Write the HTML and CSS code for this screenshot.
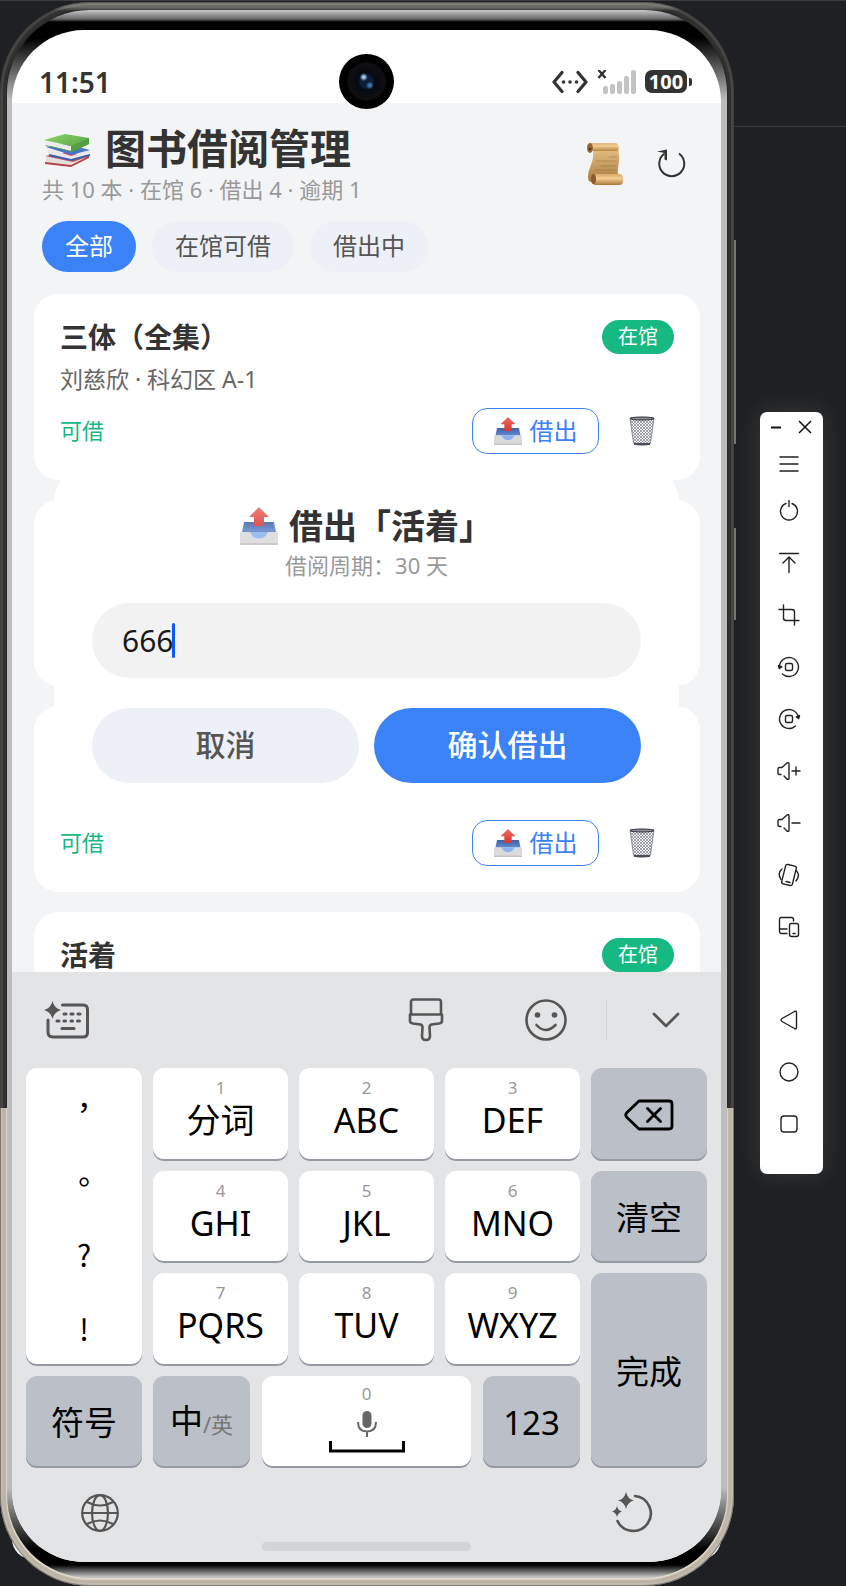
FILE: index.html
```html
<!DOCTYPE html>
<html lang="zh-CN">
<head>
<meta charset="utf-8">
<meta name="viewport" content="width=device-width, initial-scale=1">
<title>图书借阅管理</title>
<link rel="stylesheet" href="styles.css">
</head>
<body>
<svg class="defs" aria-hidden="true">
  <defs>
    <linearGradient id="g-green" x1="0" y1="0" x2="1" y2="1"><stop offset="0" stop-color="#8fd46a"/><stop offset="1" stop-color="#4c9e3c"/></linearGradient>
    <linearGradient id="g-paper" x1="0" y1="0" x2="0" y2="1"><stop offset="0" stop-color="#ecc98a"/><stop offset="1" stop-color="#a87b3e"/></linearGradient>
    <linearGradient id="g-roll" x1="0" y1="0" x2="0" y2="1"><stop offset="0" stop-color="#d9a866"/><stop offset=".4" stop-color="#f3cd94"/><stop offset="1" stop-color="#ab7638"/></linearGradient>
    <linearGradient id="g-red" x1="0" y1="0" x2="0" y2="1"><stop offset="0" stop-color="#ef6a62"/><stop offset="1" stop-color="#d8352f"/></linearGradient>
    <linearGradient id="g-tray" x1="0" y1="0" x2="0" y2="1"><stop offset="0" stop-color="#3c5ea6"/><stop offset="1" stop-color="#5f86cc"/></linearGradient>
    <pattern id="mesh" width="3" height="3" patternUnits="userSpaceOnUse"><path d="M0 0l3 3M3 0L0 3" stroke="#6b6d78" stroke-width=".6"/></pattern>
  </defs>
  <symbol id="outbox" viewBox="0 0 38 38">
    <path d="M4 15h30l2 10H2z" fill="#5b7ec0"/>
    <path d="M5 15h28l1.500 9H3.500z" fill="url(#g-tray)"/>
    <path d="M0 25h10c2 5 5 6.500 9 6.500s7-1.500 9-6.500h10v13H0z" fill="#dadada"/>
    <path d="M10 25h18c-2 5-5 6.500-9 6.500S12 30 10 25z" fill="#8db3ea"/>
    <path d="M0 36h38v2H0z" fill="#c4c4c4"/>
    <path d="M19 0l10 10h-5v9H14v-9H9z" fill="url(#g-red)"/>
  </symbol>
  <symbol id="trash" viewBox="0 0 26 30">
    <path d="M1 2l3.500 25c0 3 17 3 17 0L25 2z" fill="#f1f2f4"/>
    <path d="M1 2l3.500 25c0 3 17 3 17 0L25 2z" fill="url(#mesh)" stroke="#777984" stroke-width=".8"/>
    <path d="M5 28h16" stroke="#4b4d58" stroke-width="2"/>
    <ellipse cx="13" cy="2.500" rx="12" ry="1.500" fill="#8a8c96" stroke="#2e3039" stroke-width="1"/>
  </symbol>
</svg>

<main class="phone">
  <div class="frame"><div class="rim"><div class="screen">

    <header class="status">
      <time class="clock">11:51</time>
      <span class="camera" aria-hidden="true"></span>
      <div class="status-icons">
        <svg width="36" height="24" viewBox="0 0 36 24" fill="none" stroke="#333" stroke-width="3.200" stroke-linecap="round" stroke-linejoin="round"><path d="M10 2.500L2 12l8 9.500M26 2.500L34 12l-8 9.500"/><g fill="#333" stroke="none"><circle cx="11.500" cy="12" r="1.800"/><circle cx="18" cy="12" r="1.800"/><circle cx="24.500" cy="12" r="1.800"/></g></svg>
        <svg class="signal" width="39" height="24" viewBox="0 0 39 24"><path d="M1.500 0l7 8M8.500 0l-7 8" stroke="#333" stroke-width="2.400"/><g fill="#c3c3c3"><rect x="6" y="16" width="5" height="8" rx="2"/><rect x="13" y="14" width="5" height="10" rx="2"/><rect x="20" y="11" width="5" height="13" rx="2"/><rect x="27" y="6" width="5" height="18" rx="2"/><rect x="34" y="0" width="5" height="24" rx="2"/></g></svg>
        <span class="battery">100</span>
      </div>
    </header>

    <section class="app">
      <div class="head">
        <div class="head-text">
          <h1>
            <svg width="48" height="34" viewBox="0 0 48 34"><path d="M3 24l20-3 22 3-17 9L3 31z" fill="#e2dfdc"/><path d="M2 23l23-4 22 4-17 6z" fill="#c9505a"/><path d="M2 29l26 3 18-9v2L28 34 2 31z" fill="#b5444d"/><path d="M4 15l24 8 19-6v4l-19 6-22-6z" fill="#e8e8ea"/><path d="M3 14l21-3 23 6-19 5z" fill="#4a74c9"/><path d="M6 21l22 5 19-5v2l-19 5-22-5z" fill="#3a5fb0"/><path d="M2 8l26 5v5L3 12z" fill="#ecece8"/><path d="M1 7l21-6 24 4v6l-17 8-1-6z" fill="url(#g-green)"/><path d="M28 13l18-8v6l-17 8z" fill="#4f9a3d" opacity=".7"/><path d="M2 12l26 6 1 1-26-6z" fill="#4f9a3d"/></svg>
            <span>图书借阅管理</span>
          </h1>
          <p class="summary">共 10 本 · 在馆 6 · 借出 4 · 逾期 1</p>
        </div>
        <div class="head-actions">
          <button class="icon-btn" aria-label="记录"><svg width="36" height="42" viewBox="0 0 36 42"><path d="M7 1h23c3 2 1 7 2 11 1 7-2 12-1 21H8c0 6-7 9-7 1 0-9 6-14 5-24z" fill="url(#g-paper)"/><path d="M12 5h17M22 14h8M9 18h21M14 23h15M8 27h20" stroke="#9c7137" stroke-width="1" opacity=".5"/><rect x="5" y="31" width="31" height="11" rx="4" fill="url(#g-roll)"/><ellipse cx="6.500" cy="36" rx="2.500" ry="5" fill="#8b5c29"/><path d="M3 0h26c3 1 3 6 1 8H6z" fill="url(#g-roll)" opacity=".8"/><ellipse cx="3" cy="5" rx="3" ry="5" fill="#96662f"/><circle cx="3" cy="6" r="1.300" fill="#4d3011"/></svg></button>
          <button class="icon-btn" aria-label="刷新"><svg width="30" height="30" viewBox="0 0 30 30"><path d="M22 4.500a12.500 12.500 0 1 1-14.500 0" fill="none" stroke="#333" stroke-width="2"/><path d="M0 2.500L10 .5v11l-2.500-1V4z" fill="#333"/></svg></button>
        </div>
      </div>

      <nav class="chips">
        <button class="chip chip-on">全部</button>
        <button class="chip">在馆可借</button>
        <button class="chip">借出中</button>
      </nav>

      <div class="books">
        <article class="card">
          <div class="row"><h2>三体（全集）</h2><span class="badge">在馆</span></div>
          <p class="meta">刘慈欣 · 科幻区 A-1</p>
          <div class="row foot"><span class="avail">可借</span><button class="lend"><svg width="28" height="28"><use href="#outbox"/></svg><span>借出</span></button><button class="del" aria-label="删除"><svg width="26" height="30"><use href="#trash"/></svg></button></div>
        </article>
        <article class="card"></article>
        <article class="card">
          <div class="row foot"><span class="avail">可借</span><button class="lend"><svg width="28" height="28"><use href="#outbox"/></svg><span>借出</span></button><button class="del" aria-label="删除"><svg width="26" height="30"><use href="#trash"/></svg></button></div>
        </article>
        <article class="card">
          <div class="row"><h2>活着</h2><span class="badge">在馆</span></div>
        </article>

        <form class="dialog" role="dialog" aria-labelledby="dlg-title">
          <h2 id="dlg-title"><svg width="38" height="38"><use href="#outbox"/></svg><span>借出「活着」</span></h2>
          <p><label for="borrower">借阅周期：30 天</label></p>
          <div class="field"><input id="borrower" type="text" value="666"><span class="caret" aria-hidden="true"></span></div>
          <div class="actions"><button type="button" class="pill">取消</button><button type="button" class="pill pill-main">确认借出</button></div>
        </form>
      </div>
    </section>

    <section class="keyboard" aria-label="键盘">
      <div class="tools">
        <button class="tool" aria-label="智能输入"><svg width="46" height="38" viewBox="0 0 46 38" fill="none" stroke="#555" stroke-width="3" stroke-linecap="round"><path d="M18.500 4H39q4.500 0 4.500 4.500v23q0 4.500-4.500 4.500H9q-5 0-5-5V19"/><path d="M20 13h2M27 13h2M34 13h2M13 20h2M20 20h1.500M27 20h1.500M33.500 20h2M18 27.500h12"/><path d="M8.500 0Q10 7 17 9 10 11 8.500 18 7 11 0 9 7 7 8.500 0z" fill="#555" stroke="none"/></svg></button>
        <span class="fill"></span>
        <button class="tool" aria-label="皮肤"><svg width="36" height="44" viewBox="0 0 36 44" fill="none" stroke="#555" stroke-width="2.600" stroke-linejoin="round"><path d="M3 16V4q0-2.500 2.500-2.500h25Q33 1.500 33 4v12M2 16.500h32v6.500q0 2-3 2.500l-7.500 1q-2 .5-2 3L22 38q0 4-4 4t-4-4l.5-8.500q0-2.500-2-3l-7.500-1Q2 25 2 23z"/></svg></button>
        <button class="tool" aria-label="表情"><svg width="42" height="42" viewBox="0 0 42 42" fill="none" stroke="#555" stroke-width="2.600" stroke-linecap="round"><circle cx="21" cy="21" r="19.500"/><path d="M11.500 26q9 10 19 0"/><g fill="#555" stroke="none"><circle cx="12.500" cy="16" r="2.800"/><circle cx="29.500" cy="16" r="2.800"/></g></svg></button>
        <span class="sep"></span>
        <button class="tool" aria-label="收起"><svg width="28" height="16" viewBox="0 0 28 16" fill="none" stroke="#555" stroke-width="2.800" stroke-linecap="round" stroke-linejoin="round"><path d="M2 2l12 12L26 2"/></svg></button>
      </div>

      <div class="keys">
        <div class="col">
          <div class="key punct"><button>，</button><button>。</button><button>?</button><button>!</button></div>
          <button class="key key-fn">符号</button>
        </div>
        <div class="col">
          <div class="line"><button class="key"><small>1</small>分词</button><button class="key"><small>2</small>ABC</button><button class="key"><small>3</small>DEF</button></div>
          <div class="line"><button class="key"><small>4</small>GHI</button><button class="key"><small>5</small>JKL</button><button class="key"><small>6</small>MNO</button></div>
          <div class="line"><button class="key"><small>7</small>PQRS</button><button class="key"><small>8</small>TUV</button><button class="key"><small>9</small>WXYZ</button></div>
          <div class="line line-space">
            <button class="key key-fn"><span>中<span class="alt">/英</span></span></button>
            <button class="key key-space"><small>0</small><svg width="76" height="42" viewBox="0 0 76 42" fill="none"><rect x="33.500" y="0" width="9" height="17" rx="4.500" fill="#666"/><path d="M29 11q0 9.500 9 9.500t9-9.500M38 20.500V26" stroke="#666" stroke-width="2"/><path d="M1.500 30v10h73V30" stroke="#000" stroke-width="3"/></svg></button>
            <button class="key key-fn">123</button>
          </div>
        </div>
        <div class="col">
          <button class="key key-fn" aria-label="退格"><svg width="50" height="32" viewBox="0 0 50 32" fill="none" stroke="#000" stroke-width="2.800" stroke-linejoin="round" stroke-linecap="round"><path d="M15 2h30q3 0 3 3v22q0 3-3 3H15L3 18.500q-2.500-2.500 0-5zM23.500 9.500l13 13M36.500 9.500l-13 13"/></svg></button>
          <button class="key key-fn">清空</button>
          <button class="key key-fn key-tall">完成</button>
        </div>
      </div>

      <div class="dock">
        <button class="tool" aria-label="切换输入法"><svg width="38" height="38" viewBox="0 0 38 38" fill="none" stroke="#555" stroke-width="2.200"><circle cx="19" cy="19" r="17.800"/><ellipse cx="19" cy="19" rx="8" ry="17.800"/><path d="M1 19h36M6 8q13 7 26 0M6 30q13-7 26 0"/></svg></button>
        <button class="tool" aria-label="智能恢复"><svg width="42" height="42" viewBox="0 0 42 42"><path d="M23 4a17.500 17.500 0 1 1-17.500 25" fill="none" stroke="#555" stroke-width="2.600" stroke-linecap="round"/><path d="M14 0q1.500 7 8 8.500-6.500 1.500-8 8.500-1.500-7-8-8.500 6.500-1.500 8-8.500zM5 14q1 4.500 5 5.500-4 1-5 5.500-1-4.500-5-5.500 4-1 5-5.500z" fill="#555"/></svg></button>
      </div>
      <div class="handle"></div>
    </section>
  </div></div></div>
  <span class="side side-a"></span><span class="side side-b"></span>
</main>

<div class="desk">
<aside class="panel" aria-label="模拟器工具栏">
  <div class="win"><button aria-label="最小化"><svg width="10" height="10" viewBox="0 0 10 10"><path d="M0 5.500h10" stroke="#111" stroke-width="2"/></svg></button><button aria-label="关闭"><svg width="14" height="14" viewBox="0 0 14 14"><path d="M1 1l12 12M13 1L1 13" stroke="#111" stroke-width="1.500"/></svg></button></div>
  <button class="first" aria-label="菜单"><svg viewBox="0 0 22 22"><path d="M2 4h18M2 11h18M2 18h18"/></svg></button>
  <button aria-label="电源"><svg viewBox="0 0 22 22"><path d="M8 3.500a8.500 8.500 0 1 0 6 0M11 .5v6"/></svg></button>
  <button aria-label="置顶"><svg viewBox="0 0 22 22"><path d="M1.500 1.500h19M11 20.500V5.500M5 11l6-6 6 6"/></svg></button>
  <button aria-label="截屏"><svg viewBox="0 0 22 22"><path d="M5.500 1v13q0 2.500 2.500 2.500h13M1 5.500h13q2.500 0 2.500 2.500v13"/></svg></button>
  <button aria-label="左旋转"><svg viewBox="0 0 22 22"><path d="M1.500 12A9.500 9.500 0 1 1 4.500 18"/><rect x="7.500" y="7.500" width="7" height="7" rx="1.500"/><path d="M.5 9.500l.8 3 2.500-1.500z" fill="#222"/></svg></button>
  <button aria-label="右旋转"><svg viewBox="0 0 22 22"><path d="M17.500 18A9.500 9.500 0 1 1 20.500 10"/><rect x="7.500" y="7.500" width="7" height="7" rx="1.500"/><path d="M21.500 7.500l-.8 3-2.500-1.500z" fill="#222"/></svg></button>
  <button aria-label="音量加"><svg viewBox="0 0 22 22"><path d="M3 14.500H1.500Q0 14.500 0 13V9q0-1.500 1.500-1.500H4L9 3q2-1 2 1v14q0 2-2 1l-3-3M14 11h8M18 7v8"/></svg></button>
  <button aria-label="音量减"><svg viewBox="0 0 22 22"><path d="M3 14.500H1.500Q0 14.500 0 13V9q0-1.500 1.500-1.500H4L9 3q2-1 2 1v14q0 2-2 1l-3-3M14 11h8"/></svg></button>
  <button aria-label="摇一摇"><svg viewBox="0 0 22 22"><rect x="5.500" y="1" width="11" height="20" rx="2" transform="rotate(14 11 11)"/><path d="M8 17.500l4 1M4 5Q-1 9 3 15.500M18 6.500q5 4 0 10.500"/></svg></button>
  <button aria-label="多设备"><svg viewBox="0 0 22 22"><path d="M9 17.500H3.500q-2 0-2-2v-12q0-2 2-2h10q2 0 2 2V5M1.500 13H9"/><rect x="11.500" y="7.500" width="9" height="13" rx="2"/><path d="M15 17.500h2"/></svg></button>
  <button class="nav-first" aria-label="返回"><svg viewBox="0 0 22 22"><path d="M18.500 3.500v15q0 2-2 1L4 12.500q-2-1.500 0-3l12.500-7q2-1 2 1z"/></svg></button>
  <button aria-label="主页"><svg viewBox="0 0 22 22"><circle cx="11" cy="11" r="9"/></svg></button>
  <button aria-label="任务"><svg viewBox="0 0 22 22"><rect x="3" y="3" width="16" height="16" rx="3"/></svg></button>
</aside>
</div>
</body>
</html>
```
FILE: styles.css
```css
* { box-sizing: border-box; margin: 0; }

body {
  display: flex;
  height: 100vh;
  min-height: 1400px;
  padding-top: 2px;
  overflow: hidden;
  background: linear-gradient(#3c3d40, #3c3d40) 0 0 / 100% 1px no-repeat #1e2023;
  font-family: "Noto Sans", "Noto Sans CJK SC", sans-serif;
  color: #333;
}

button {
  padding: 0;
  border: 0;
  background: none;
  font: inherit;
  color: inherit;
}

svg { display: block; flex: none; }
.defs { position: absolute; width: 0; height: 0; }

/* device body */
.phone { position: relative; flex: 1; min-width: 0; display: flex; }
.phone::before {
  content: "";
  position: absolute;
  inset: auto 13px 27px 12px;
  height: 60px;
  border-radius: 20px;
  background: #eee;
}
.frame {
  position: relative;
  flex: 1;
  min-width: 0;
  display: flex;
  padding: 8px 7px;
  border-radius: 90px;
  background: linear-gradient(#7a7a75 0, #7a7a75 5px, #2b2b2b 9px, #2b2b2b 1106px, #e2d9ca 1106px);
  box-shadow: inset 0 0 0 1px rgba(60, 58, 52, .5), inset 0 0 0 3px rgba(255, 255, 255, .1), inset 0 0 1px 6px rgba(70, 66, 58, .25);
}
.rim {
  flex: 1;
  min-width: 0;
  display: flex;
  padding: 20px 6px 16px 5px;
  border-radius: 83px;
  background: linear-gradient(#c8c8c8 0, #686868 9px, #000 12px, #000 28px, #bcbcbc 90px, #bcbcbc calc(100% - 90px), #000 calc(100% - 28px), #000 calc(100% - 13px), #c4c4c4 calc(100% - 1px));
}
.screen {
  flex: 1;
  min-width: 0;
  display: flex;
  flex-direction: column;
  overflow: hidden;
  border-radius: 72px;
  background: #fff;
}
.side { position: absolute; right: -2px; width: 2px; background: #77776f; }
.side-a { top: 238px; height: 204px; }
.side-b { top: 526px; height: 92px; }

/* status bar */
.status {
  position: relative;
  display: flex;
  align-items: center;
  justify-content: space-between;
  flex: none;
  height: 73px;
  padding: 30px 29px 0 27px;
}
.clock { font-size: 28px; line-height: 40px; font-weight: 600; }
.camera {
  position: absolute;
  z-index: 2;
  left: 50%;
  top: 24px;
  width: 55px;
  height: 55px;
  margin-left: -28px;
  border-radius: 50%;
  background: radial-gradient(circle at 45% 42%, #9fd0ee 0 1px, transparent 4px), radial-gradient(circle at 56% 57%, #3f78b0 0 1px, transparent 4px), radial-gradient(circle, #0c1d38 0 6px, #06090f 9px, #101012 18px, #000 20px);
}
.status-icons { display: flex; align-items: center; }
.signal { margin: 0 9px 0 9px; }
.battery {
  position: relative;
  width: 42px;
  margin-right: 5px;
  border-radius: 7px;
  background: #333;
  color: #fff;
  font-size: 20px;
  line-height: 23px;
  font-weight: 700;
  text-align: center;
}
.battery::after {
  content: "";
  position: absolute;
  left: 44px;
  top: 8px;
  width: 3px;
  height: 8px;
  border-radius: 0 2px 2px 0;
  background: #333;
}

/* library app */
.app { flex: 1; min-height: 0; overflow: hidden; padding: 21px 21px 0 22px; background: #f2f4f6; }
.head { display: flex; align-items: center; justify-content: space-between; padding: 0 13px 0 8px; }
h1 { display: flex; align-items: center; gap: 14px; padding-left: 1px; font-size: 41px; line-height: 48px; font-weight: 700; }
h1 svg { margin-top: 4px; }
.summary { margin-top: 3px; font-size: 22px; line-height: 28px; color: #999; }
.head-actions { display: flex; align-items: center; gap: 34px; }
.chips { display: flex; gap: 16px; margin: 18px 8px 22px; }
.chip {
  height: 51px;
  padding: 0 23px 4px;
  border-radius: 26px;
  background: #edf0f6;
  color: #555;
  font-size: 24px;
}
.chip-on { background: #3c82f7; color: #fff; }

.books { position: relative; display: flex; flex-direction: column; gap: 20px; }
.card {
  display: flex;
  flex-direction: column;
  min-height: 186px;
  padding: 26px;
  border-radius: 24px;
  background: #fff;
}
.row { display: flex; align-items: center; justify-content: space-between; }
.card h2 { font-size: 28px; line-height: 34px; font-weight: 700; }
.badge {
  width: 72px;
  border-radius: 17px;
  background: #15b981;
  color: #fff;
  font-size: 20px;
  line-height: 34px;
  text-align: center;
}
.meta { margin-top: 10px; font-size: 23px; line-height: 30px; color: #666; }
.foot { margin-top: auto; }
.avail { flex: 1; padding-bottom: 2px; font-size: 22px; line-height: 30px; color: #15b981; }
.lend {
  display: flex;
  align-items: center;
  justify-content: center;
  gap: 8px;
  width: 127px;
  height: 46px;
  border: 1px solid #3c82f7;
  border-radius: 15px;
  color: #3c82f7;
  font-size: 24px;
}
.lend span { padding-bottom: 4px; }
.del { display: flex; justify-content: center; width: 64px; margin-left: 11px; }

.dialog {
  position: absolute;
  inset: 168px 21px auto 20px;
  padding: 40px 38px 37px;
  border-radius: 40px;
  background: #fff;
}
.dialog h2 { display: flex; align-items: center; justify-content: center; gap: 11px; font-size: 34px; line-height: 48px; font-weight: 700; }
.dialog h2 svg { opacity: .85; }
.dialog p { font-size: 22px; line-height: 30px; color: #999; text-align: center; }
.field { position: relative; margin-top: 23px; }
.field input {
  display: block;
  width: 100%;
  height: 75px;
  padding: 0 30px;
  border: 0;
  border-radius: 38px;
  outline: 0;
  background: #f2f2f2;
  color: #191919;
  font: inherit;
  font-size: 30px;
}
.caret { position: absolute; left: 80px; top: 20px; width: 3px; height: 35px; border-radius: 2px; background: #0a59f7; }
.actions { display: grid; grid-template-columns: 1fr 1fr; gap: 15px; margin-top: 30px; }
.pill { height: 75px; padding-bottom: 5px; border-radius: 38px; background: #edf0f6; color: #555; font-size: 30px; font-weight: 500; }
.pill-main { background: #3c82f7; color: #fff; }

/* soft keyboard */
.keyboard { flex: none; background: #e3e4e6; padding: 0 14px 11px; }
.tools { display: flex; align-items: center; height: 96px; padding: 0 27px 0 18px; }
.fill { flex: 1; }
.tools .tool + .tool { margin-left: 81px; }
.sep { width: 1px; height: 40px; margin: 0 45px 0 39px; background: #d2d3d5; }
.keys { display: grid; grid-template-columns: 116fr 427fr 116fr; gap: 11px; height: 400px; }
.col { display: grid; grid-template-rows: repeat(4, 1fr); gap: 10px; min-width: 0; min-height: 0; }
.line { display: grid; grid-template-columns: repeat(3, 1fr); gap: 11px; min-height: 0; }
.line-space { grid-template-columns: 97fr 209fr 97fr; gap: 12px; }
.key {
  display: flex;
  flex-direction: column;
  align-items: center;
  justify-content: center;
  min-width: 0;
  min-height: 0;
  padding-bottom: 10px;
  border-radius: 11px;
  background: #fff;
  box-shadow: inset 0 -2px 0 #959aa3;
  color: #000;
  font-size: 34px;
  line-height: 42px;
}
.key small { font-size: 17px; line-height: 22px; color: #999; }
.key-space { gap: 6px; padding-bottom: 8px; }
.key-fn { padding: 2px 0 0; background: #bbc0c8; font-size: 33px; }
.key-tall { grid-row: span 2; }
.punct { grid-row: span 3; display: grid; padding: 0; font-size: 30px; font-family: "Noto Sans CJK TC", sans-serif; }
.alt { font-size: 22px; color: #777; }
.dock { display: flex; align-items: center; justify-content: space-between; height: 74px; padding: 16px 53px 0 55px; }
.handle { width: 209px; height: 9px; margin: 0 auto; border-radius: 5px; background: #d3d4d6; }

/* emulator side panel */
.desk {
  flex: none;
  padding: 410px 23px 0 26px;
  background: linear-gradient(#38393c, #38393c) 0 124px / 100% 1px no-repeat;
}
.panel {
  display: flex;
  flex-direction: column;
  width: 63px;
  padding-bottom: 24px;
  border-radius: 7px;
  background: #fff;
  box-shadow: 0 0 26px rgba(255, 255, 240, .12);
}
.win { display: flex; align-items: center; justify-content: space-between; height: 30px; padding: 0 11px; }
.panel > button { display: flex; align-items: center; justify-content: center; padding-right: 5px; height: 52px; }
.panel > button svg { width: 22px; height: 22px; overflow: visible; fill: none; stroke: #222; stroke-width: 1.4px; stroke-linecap: round; stroke-linejoin: round; }
.panel > .first { height: 43px; }
.panel > .nav-first { margin-top: 41px; }
```
